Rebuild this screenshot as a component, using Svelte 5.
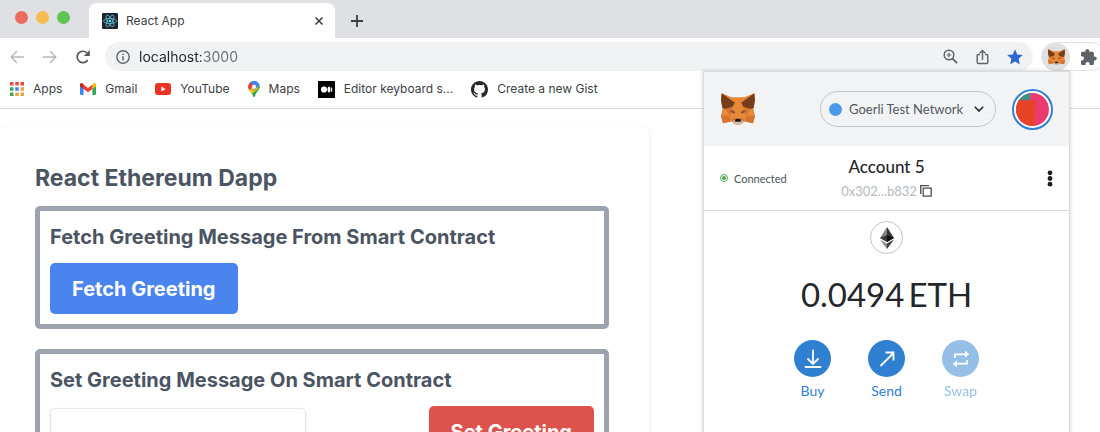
<script>
  let network = $state('Goerli Test Network');
  let address = $state('localhost:3000');
  let greeting = $state('');
</script>

{#snippet fox()}
  <svg class="fox" viewBox="0 0 102 94" aria-hidden="true">
    <path fill="#e8883a" d="M2 0 32 12H70L100 0l2 20-5 26 5 22-6 22-26-6-8 8-8 2H48l-8-2-8-8-26 6-6-22 5-22L0 20Z" />
    <path fill="#763e1a" d="M2 0 42 28 34 41 14 47 4 44 0 20ZM100 0 60 28l8 13 20 6 10-3 4-24Z" />
    <path fill="#d5752f" d="M2 66 24 66 32 84 6 90 0 68ZM100 66H78L70 84l26 6 6-22ZM14 47 34 41 32 62 24 66ZM88 47 68 41l2 21 8 4Z" />
    <path fill="#ea8a36" d="M14 47 3 66h23ZM88 47 99 66H76ZM42 28h18l-4 46H46Z" />
    <path fill="#a4582c" d="m25 53 12-3 6 11-9-3ZM77 53l-12-3-6 11 9-3Z" />
    <path fill="#5c4a4a" d="m31 56 8-2 2 6ZM71 56l-8-2-2 6Z" />
    <path fill="#c96a2b" d="m32 84 8-12 2 9ZM70 84l-8-12-2 9Z" />
    <path fill="#d2bfaf" d="m34 81 8 3h18l8-3-8 11-6 2H48l-6-2Z" />
    <path fill="#19191b" d="M44 76h14l2 9H42Z" />
  </svg>
{/snippet}

<div class="browser">
  <header class="chrome">
    <div class="tabs">
      <div class="lights">
        <button class="light red" aria-label="Close window"></button>
        <button class="light yellow" aria-label="Minimise window"></button>
        <button class="light green" aria-label="Zoom window"></button>
      </div>
      <div class="tab">
        <svg class="favicon" viewBox="0 0 32 32" aria-hidden="true">
          <rect width="32" height="32" rx="2" fill="#20232a" />
          <g fill="none" stroke="#61c9e8" stroke-width="1.5">
            <ellipse cx="16" cy="16" rx="13" ry="5" />
            <ellipse cx="16" cy="16" rx="13" ry="5" transform="rotate(60 16 16)" />
            <ellipse cx="16" cy="16" rx="13" ry="5" transform="rotate(120 16 16)" />
          </g>
          <circle cx="16" cy="16" r="2.6" fill="#61dafb" />
        </svg>
        <span class="tab-title">React App</span>
        <button class="icon" aria-label="Close tab">
          <svg width="10" height="10" viewBox="0 0 10 10"><path d="m1.5 1.5 7 7m0-7-7 7" stroke="#3c4043" stroke-width="1.6" /></svg>
        </button>
      </div>
      <button class="icon new-tab" aria-label="New tab">
        <svg width="14" height="14" viewBox="0 0 14 14"><path d="M7 1v12M1 7h12" stroke="#3c4043" stroke-width="1.8" /></svg>
      </button>
    </div>

    <div class="toolbar">
      <div class="nav">
        <button class="icon" aria-label="Back">
          <svg width="14" height="14" viewBox="0 0 14 14" fill="none" stroke="#b4b7ba" stroke-width="1.4"><path d="M14 7H1.5M7 1 1.2 7 7 13" /></svg>
        </button>
        <button class="icon" aria-label="Forward">
          <svg width="14" height="14" viewBox="0 0 14 14" fill="none" stroke="#b4b7ba" stroke-width="1.4"><path d="M0 7h12.5M7 1l5.8 6L7 13" /></svg>
        </button>
        <button class="icon" aria-label="Reload">
          <svg width="14" height="14" viewBox="0 0 14 14"><path d="M11.7 10A5.7 5.7 0 1 1 11 3" fill="none" stroke="#55595e" stroke-width="1.7" /><path d="M13.8 0v6H7.8Z" fill="#55595e" /></svg>
        </button>
      </div>
      <div class="omnibox">
        <svg width="14" height="14" viewBox="0 0 14 14" aria-hidden="true"><circle cx="7" cy="7" r="6.2" fill="none" stroke="#5f6368" stroke-width="1.4" /><path d="M7 6.2v4.2M7 3.4v1.5" stroke="#5f6368" stroke-width="1.5" /></svg>
        <input class="url" type="text" aria-label="Address" bind:value={address} />
        <button class="icon" aria-label="Zoom">
          <svg width="15" height="15" viewBox="0 0 15 15" fill="none" stroke="#5f6368"><circle cx="6" cy="6" r="4.8" stroke-width="1.5" /><path d="m9.5 9.5 4.6 4.6" stroke-width="1.8" /><path d="M6 3.7v4.6M3.7 6h4.6" stroke-width="1.2" /></svg>
        </button>
        <button class="icon" aria-label="Share">
          <svg width="13" height="16" viewBox="0 0 13 16" fill="none" stroke="#5f6368" stroke-width="1.4"><path d="M4 5.5H2.2q-1 0-1 1v7q0 1 1 1h8.600q1 0 1-1v-7q0-1-1-1H9M6.500 11V1.600M3.700 4.200 6.500 1.400l2.800 2.800" /></svg>
        </button>
        <button class="icon" aria-label="Bookmark this page">
          <svg width="16" height="16" viewBox="0 0 16 16"><path fill="#2b68d2" d="m8 .3 2.200 5.200 5.600.5-4.200 3.700 1.200 5.700L8 12.500l-4.800 2.900 1.200-5.700L.2 6l5.600-.5Z" /></svg>
        </button>
      </div>
      <div class="extensions">
        <button class="ext active" aria-label="MetaMask">{@render fox()}</button>
        <button class="icon" aria-label="Extensions">
          <svg width="16" height="16" viewBox="0 0 16 16"><path fill="#5f6368" d="M13.800 7.500h-.9V4.300c0-.9-.7-1.500-1.500-1.500H8.300V2a2 2 0 0 0-4 0v.8H1.500C.7 2.800 0 3.400 0 4.300v2.900h.9a2.100 2.100 0 0 1 0 4.200H0v3c0 .9.700 1.600 1.500 1.600h3v-.9a2.100 2.100 0 0 1 4.200 0v.9h2.700c.8 0 1.500-.7 1.500-1.600v-3h.9a1.950 1.950 0 0 0 0-3.900Z" /></svg>
        </button>
      </div>
    </div>

    <nav class="bookmarks" aria-label="Bookmarks">
      <a href="#apps">
        <svg width="14" height="14" viewBox="0 0 14 14" aria-hidden="true">
          <path fill="#ea4a3d" d="M0 0h3.500v3.500H0zM5.250 0h3.500v3.500h-3.500zM10.500 0H14v3.500h-3.500z" />
          <path fill="#45a158" d="M0 5.250h3.500v3.500H0zM0 10.500h3.500V14H0z" />
          <path fill="#4382ee" d="M5.250 5.250h3.500v3.500h-3.500z" />
          <path fill="#e9a43c" d="M10.500 5.250H14v3.500h-3.500zM5.250 10.500h3.500V14h-3.500zM10.500 10.500H14V14h-3.500z" />
        </svg>
        <span>Apps</span>
      </a>
      <a href="#gmail">
        <svg width="16" height="12" viewBox="0 0 16 12" aria-hidden="true">
          <path fill="#4285f4" d="M0 3h3.600v9H1.200Q0 12 0 10.800Z" />
          <path fill="#34a853" d="M12.400 3H16v7.800q0 1.200-1.200 1.200h-2.400Z" />
          <path fill="#ea4335" d="M3.600 1.500 8 4.900l4.400-3.400v4.400L8 9.300 3.600 5.900Z" />
          <path fill="#c5221f" d="M0 1.700C0 0 1.900-.6 3.100.9l.5.5v4.500L0 3.200Z" />
          <path fill="#fbbc04" d="M16 1.700C16 0 14.100-.6 12.900.9l-.5.5v4.500L16 3.200Z" />
        </svg>
        <span>Gmail</span>
      </a>
      <a href="#youtube">
        <svg width="16" height="12" viewBox="0 0 16 12" aria-hidden="true"><rect width="16" height="12" rx="3" fill="#eb3223" /><path fill="#fff" d="m6.300 3.400 4.400 2.600-4.400 2.600Z" /></svg>
        <span>YouTube</span>
      </a>
      <a href="#maps">
        <svg width="12" height="16" viewBox="0 0 12 16" aria-hidden="true">
          <clipPath id="pin"><path d="M6 0a5.800 5.800 0 0 1 5.800 5.800c0 3.700-3.600 4.700-4.700 9.200q-.2 1-1.100 1t-1.100-1C3.800 10.500.2 9.500.2 5.800A5.800 5.800 0 0 1 6 0Z" /></clipPath>
          <g clip-path="url(#pin)">
            <path fill="#34a853" d="M0 0h12v16H0Z" />
            <path fill="#fbbc04" d="M0 10.500 8.500 1 10 8 3.500 13Z" />
            <path fill="#4285f4" d="M4.500 5.500 8 0h4v3L6 9.500Z" />
            <path fill="#ea4335" d="m0 2 2-2 4.500 3.500L2 8.800 0 9Z" />
            <path fill="#4285f4" d="M2.200 1.500 4 0h6L6 4.200Z" />
          </g>
          <circle cx="6" cy="5.800" r="2.100" fill="#fff" />
        </svg>
        <span>Maps</span>
      </a>
      <a href="#editor">
        <svg width="17" height="17" viewBox="0 0 17 17" aria-hidden="true"><path d="M0 0h17v17H0z" /><g fill="#fff"><circle cx="6" cy="8.500" r="3.100" /><ellipse cx="11" cy="8.500" rx="1.500" ry="2.900" /><ellipse cx="13.700" cy="8.500" rx=".6" ry="2.600" /></g></svg>
        <span>Editor keyboard s...</span>
      </a>
      <a href="#gist">
        <svg width="17" height="17" viewBox="0 0 16 16" aria-hidden="true"><path fill="#24292e" d="M8 0C3.580 0 0 3.580 0 8c0 3.540 2.290 6.530 5.470 7.590.4.070.55-.17.55-.38 0-.19-.01-.82-.01-1.490-2.010.37-2.530-.49-2.690-.94-.09-.23-.48-.94-.82-1.130-.28-.15-.68-.52-.01-.53.63-.01 1.080.58 1.230.82.72 1.210 1.870.87 2.330.66.07-.52.28-.87.51-1.070-1.780-.2-3.640-.89-3.640-3.950 0-.87.31-1.590.82-2.150-.08-.2-.36-1.020.08-2.120 0 0 .67-.21 2.200.82.64-.18 1.320-.27 2-.27s1.360.09 2 .27c1.530-1.040 2.200-.82 2.200-.82.44 1.100.16 1.920.08 2.120.51.56.82 1.270.82 2.150 0 3.070-1.870 3.750-3.650 3.950.29.25.54.73.54 1.480 0 1.070-.01 1.930-.01 2.200 0 .21.15.46.55.38A8.010 8.010 0 0 0 16 8c0-4.420-3.580-8-8-8Z" /></svg>
        <span>Create a new Gist</span>
      </a>
    </nav>
  </header>

  <main class="page">
    <div class="card">
      <h1>React Ethereum Dapp</h1>
      <section class="panel">
        <h2>Fetch Greeting Message From Smart Contract</h2>
        <button class="action blue">Fetch Greeting</button>
      </section>
      <section class="panel">
        <h2>Set Greeting Message On Smart Contract</h2>
        <div class="row">
          <input class="field" type="text" aria-label="Greeting" bind:value={greeting} />
          <button class="action crimson">Set Greeting</button>
        </div>
      </section>
    </div>
  </main>

  <aside class="wallet" aria-label="Wallet">
    <div class="wallet-head">
      {@render fox()}
      <label class="network">
        <span class="dot"></span>
        <select aria-label="Network" bind:value={network}>
          <option>Goerli Test Network</option>
        </select>
        <svg width="10" height="6" viewBox="0 0 10 6" aria-hidden="true"><path d="m.8.8 4.200 4.200L9.200.8" fill="none" stroke="#24272a" stroke-width="1.600" /></svg>
      </label>
      <button class="avatar" aria-label="Account menu">
        <svg viewBox="0 0 33 33" aria-hidden="true">
          <clipPath id="disc"><circle cx="16.500" cy="16.500" r="16.500" /></clipPath>
          <g clip-path="url(#disc)">
            <path fill="#e93b70" d="M0 0h33v33H0z" />
            <path fill="#3d9188" d="M0 0h15l-2 8H0Z" />
            <path fill="#e84326" d="M0 6.500 20 8l-2 25H0Z" />
          </g>
        </svg>
      </button>
    </div>

    <div class="account">
      <div class="status">
        <svg width="8" height="8" viewBox="0 0 8 8" aria-hidden="true"><circle cx="4" cy="4" r="3.500" fill="none" stroke="#4ca750" /><circle cx="4" cy="4" r="2" fill="#4ca750" /></svg>
        <span>Connected</span>
      </div>
      <button class="identity">
        <span class="name">Account 5</span>
        <span class="hash">
          0x302...b832
          <svg width="12" height="12" viewBox="0 0 12 12" fill="none" stroke="#4a4e53" stroke-width="1.300" aria-hidden="true"><path d="M3.200 3.200h8v8h-8ZM.7 9V.7H9" /></svg>
        </span>
      </button>
      <button class="icon more" aria-label="Account options">
        <svg width="6" height="17" viewBox="0 0 6 17"><g fill="#1c1e21"><circle cx="3" cy="2.800" r="2.400" /><circle cx="3" cy="8.500" r="2.400" /><circle cx="3" cy="14.200" r="2.400" /></g></svg>
      </button>
    </div>

    <div class="balance">
      <div class="token">
        <svg width="14" height="22" viewBox="0 0 14 22" aria-hidden="true">
          <path fill="#828384" d="M7 0v15L0 11Z" /><path fill="#343434" d="M7 0v15l7-4Z" />
          <path fill="#3a3a3b" d="m0 11 7-3v7Z" /><path fill="#111" d="M14 11 7 8v7Z" />
          <path fill="#8c8c8c" d="m0 12.500 7 4V22Z" /><path fill="#3c3c3b" d="m14 12.500-7 4V22Z" />
        </svg>
      </div>
      <p class="amount"><span>0.0494</span><span>ETH</span></p>
      <div class="actions">
        <button>
          <span class="round"><svg width="18" height="20" viewBox="0 0 18 20" fill="none" stroke="#fff" stroke-width="1.800" stroke-linecap="round" aria-hidden="true"><path d="M9 1.500v13M4 10l5 5 5-5M1.500 18h15" /></svg></span>
          <span>Buy</span>
        </button>
        <button>
          <span class="round"><svg width="16" height="16" viewBox="0 0 16 16" fill="none" stroke="#fff" stroke-width="1.800" aria-hidden="true"><path d="M1.500 15 14.500 2M6.500 1.500h8v8" /></svg></span>
          <span>Send</span>
        </button>
        <button disabled>
          <span class="round"><svg width="18" height="18" viewBox="0 0 18 18" aria-hidden="true"><path d="M3 8V4.300h10.500M15 10v3.700H4.500" fill="none" stroke="#fff" stroke-width="1.700" /><path fill="#fff" d="m13 .8 4.200 3.500L13 7.800ZM5 10.200.8 13.700 5 17.200Z" /></svg></span>
          <span>Swap</span>
        </button>
      </div>
    </div>
  </aside>
</div>

<style>
  :global(body) { margin: 0; background: #fff; }
  .browser, .browser * { box-sizing: border-box; }
  .browser {
    position: relative;
    height: 100vh;
    overflow: hidden;
    display: flex;
    flex-direction: column;
    font-family: Inter, "Liberation Sans", sans-serif;
    color: #3c4043;
  }
  button, input, select { font: inherit; color: inherit; margin: 0; }
  button { border: 0; padding: 0; background: none; cursor: pointer; }
  svg { display: block; flex: none; }
  .icon { display: flex; align-items: center; justify-content: center; }

  .tabs { display: flex; height: 38px; background: #dee0e4; }
  .lights { display: flex; gap: 8px; padding: 11px 19px 0 15px; }
  .light { width: 13px; height: 13px; border-radius: 50%; }
  .red { background: #ed6a5f; }
  .yellow { background: #f5bd4f; }
  .green { background: #61c554; }
  .tab {
    display: flex;
    align-items: center;
    gap: 8px;
    width: 246px;
    margin-top: 3px;
    padding: 0 11px 0 13px;
    background: #fff;
    border-radius: 8px 8px 0 0;
    font-size: 12px;
  }
  .tab-title { flex: 1; }
  .favicon { width: 16px; height: 16px; }
  .new-tab { margin: 4px 0 0 15px; }

  .toolbar { display: flex; align-items: center; height: 37px; overflow: hidden; }
  .nav { display: flex; gap: 19px; padding: 0 15px 0 10px; }
  .omnibox {
    flex: 1;
    display: flex;
    align-items: center;
    gap: 18px;
    height: 29px;
    padding: 0 10px 0 11px;
    border-radius: 15px;
    background: #f1f2f4;
  }
  .url {
    flex: 1;
    min-width: 0;
    margin-left: -9px;
    padding: 0;
    border: 0;
    outline: 0;
    font-size: 14px;
    line-height: 20px;
    color: #202124;
    background: linear-gradient(to right, #202124 62px, #6a6e73 62px);
    background-clip: text;
    -webkit-background-clip: text;
    -webkit-text-fill-color: transparent;
  }
  .extensions {
    display: flex;
    align-items: center;
    gap: 11px;
    height: 29px;
    margin: 0 -6px 0 8px;
    padding-right: 8px;
    border: 1px solid #e2e3e5;
    border-radius: 15px;
  }
  .ext { display: grid; place-items: center; width: 28px; height: 28px; border-radius: 50%; background: #dfe0e1; }
  .ext .fox { width: 17px; height: 16px; }

  .bookmarks { display: flex; align-items: center; gap: 18px; height: 34px; padding: 0 10px 5px; border-bottom: 1px solid #dcdddf; }
  .bookmarks a { display: flex; align-items: center; gap: 9px; color: #3c4043; font-size: 12px; line-height: 16px; text-decoration: none; white-space: nowrap; }

  .page { flex: 1; min-height: 0; padding-top: 18px; }
  .card {
    width: 59%;
    min-height: 340px;
    padding: 35px 40px 24px 35px;
    border-radius: 0 6px 6px 0;
    box-shadow: 1px 1px 4px rgba(0, 0, 0, 0.07);
    color: #4b5462;
  }
  h1 { margin: 0 0 12px; font-size: 23px; line-height: 32px; font-weight: 700; }
  .panel { margin-bottom: 20px; padding: 10px; border: 5px solid #9ca3af; border-radius: 5px; }
  h2 { margin: 0 0 9px; font-size: 20px; line-height: 33px; font-weight: 700; }
  .action { display: block; height: 51px; padding: 0 22px; border-radius: 5px; color: #fff; font-size: 20px; line-height: 30px; font-weight: 700; white-space: nowrap; }
  .blue { background: #4a84ee; }
  .crimson { background: #dd524c; }
  .row { display: flex; justify-content: space-between; }
  .field { width: 47%; height: 51px; margin-top: 2px; padding: 0 12px; border: 1px solid #e3e5e8; border-radius: 5px; box-shadow: 0 1px 3px rgba(0, 0, 0, 0.1); background: #fff; }

  .wallet {
    position: absolute;
    top: 71px;
    right: 30px;
    bottom: -8px;
    width: 367px;
    background: #fff;
    border: 1px solid #dadbdc;
    box-shadow: 0 0 4px rgba(0, 0, 0, 0.2);
    font-family: Lato, "Open Sans", sans-serif;
    color: #24272a;
  }
  .wallet-head { display: flex; align-items: center; height: 74px; padding: 0 16px 0 17px; background: #f2f3f5; }
  .wallet-head .fox { width: 34px; height: 32px; }
  .network {
    display: flex;
    align-items: center;
    gap: 7px;
    height: 36px;
    margin: 0 16px 0 auto;
    padding: 0 11px 0 8px;
    border: 1px solid #c3c5c9;
    border-radius: 18px;
    color: #535a61;
  }
  .dot { width: 13px; height: 13px; border-radius: 50%; background: #4b99ea; }
  select { appearance: none; width: 118px; padding: 0; border: 0; outline: 0; background: none; font-size: 13px; line-height: 18px; }
  .avatar { width: 41px; height: 41px; padding: 2px; border: 2px solid #2f80d1; border-radius: 50%; background: #fff; }
  .avatar svg { width: 33px; height: 33px; }

  .account { display: grid; grid-template-columns: 1fr auto 1fr; align-items: center; height: 65px; padding: 0 16px; border-bottom: 1px solid #d6d9dc; }
  .status { display: flex; align-items: center; gap: 6px; font-size: 11px; color: #4d535a; }
  .identity { display: flex; flex-direction: column; align-items: center; padding-top: 2px; }
  .name { font-size: 17px; line-height: 24px; font-weight: 500; }
  .hash { display: flex; align-items: center; gap: 3px; font-size: 13px; line-height: 24px; color: #b5b9bd; }
  .more { justify-self: end; }

  .balance { display: flex; flex-direction: column; align-items: center; padding-top: 10px; }
  .token { display: grid; place-items: center; width: 33px; height: 33px; border: 1px solid #c3c5c9; border-radius: 50%; }
  .amount { display: flex; gap: 4px; margin: 19px 0 25px; font-size: 33px; line-height: 42px; }
  .actions { display: flex; gap: 20px; }
  .actions button { display: flex; flex-direction: column; align-items: center; gap: 4px; width: 54px; font-size: 14px; line-height: 20px; color: #2f80d1; }
  .actions button:disabled { opacity: 0.5; }
  .round { display: grid; place-items: center; width: 37px; height: 37px; border-radius: 50%; background: #2f80d1; }
</style>
